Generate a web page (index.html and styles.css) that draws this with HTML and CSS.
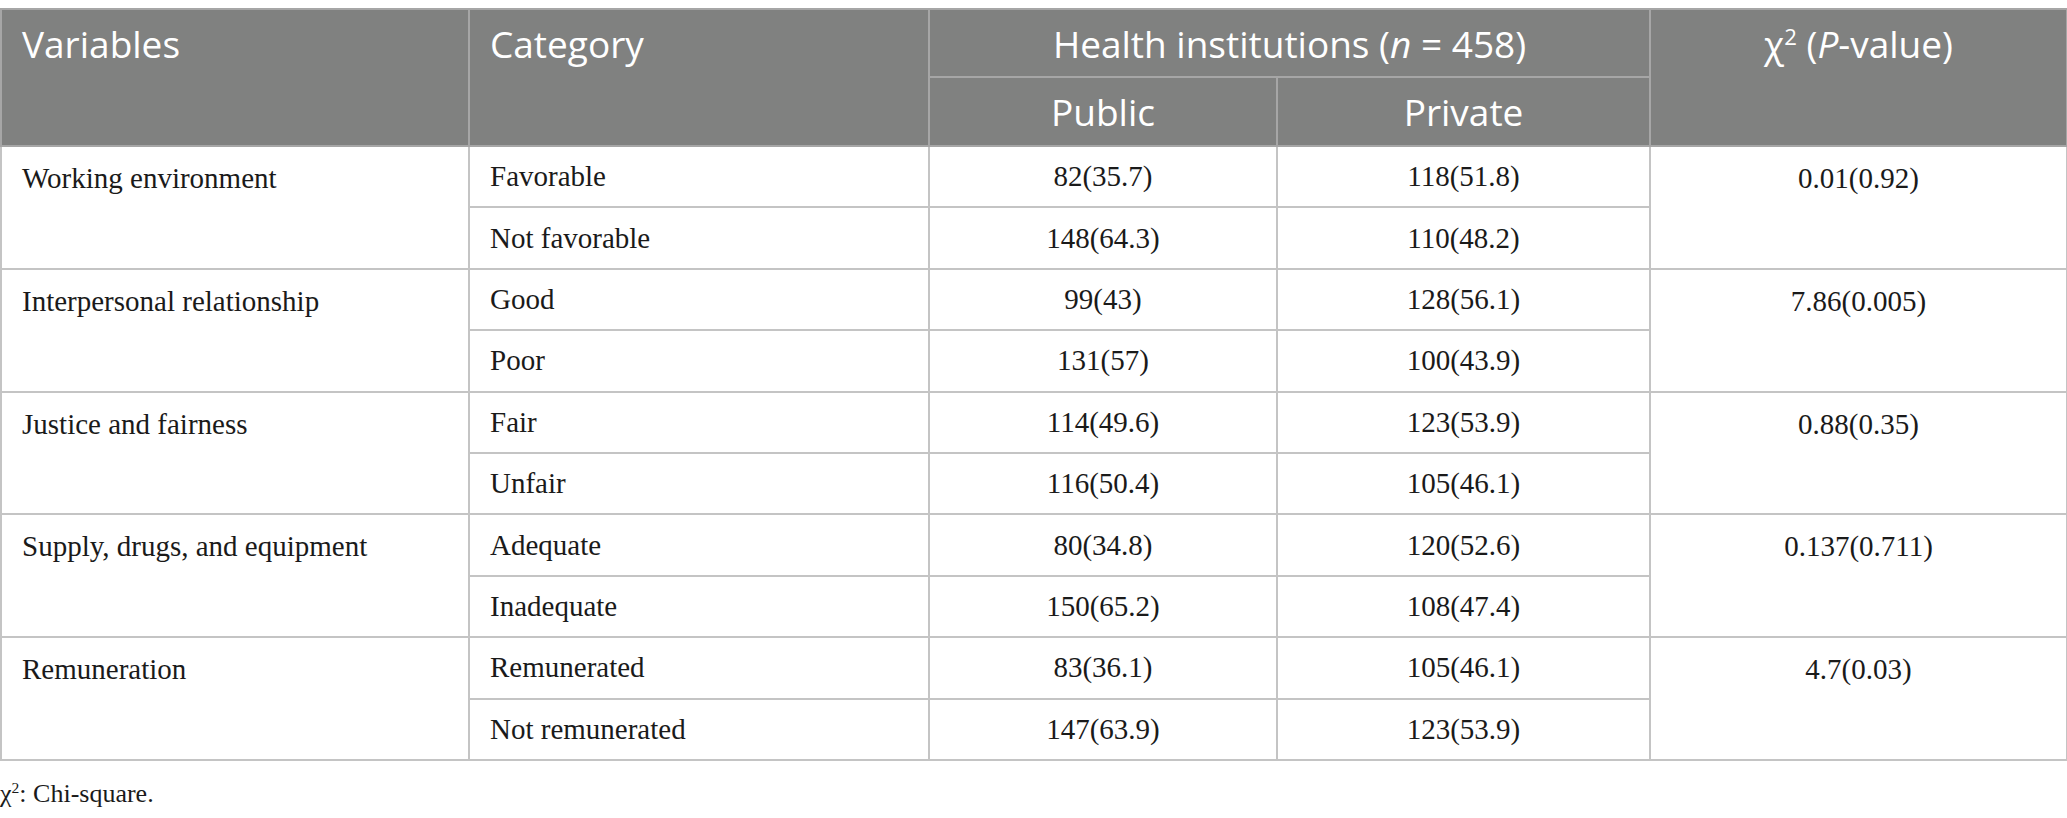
FILE: index.html
```html
<!DOCTYPE html>
<html>
<head>
<meta charset="utf-8">
<link rel="stylesheet" href="styles.css">
</head>
<body>
<table class="tbl">
  <colgroup>
    <col class="c1"><col class="c2"><col class="c3"><col class="c4"><col class="c5">
  </colgroup>
  <thead>
    <tr class="h1">
      <th rowspan="2" class="left top">Variables</th>
      <th rowspan="2" class="left top">Category</th>
      <th colspan="2">Health institutions (<i>n</i> = 458)</th>
      <th rowspan="2" class="top">χ<sup>2</sup> (<i>P</i>-value)</th>
    </tr>
    <tr class="h2">
      <th>Public</th>
      <th>Private</th>
    </tr>
  </thead>
  <tbody>
    <tr><td rowspan="2" class="var">Working environment</td><td class="cat">Favorable</td><td>82(35.7)</td><td>118(51.8)</td><td rowspan="2" class="chi">0.01(0.92)</td></tr>
    <tr><td class="cat">Not favorable</td><td>148(64.3)</td><td>110(48.2)</td></tr>
    <tr><td rowspan="2" class="var">Interpersonal relationship</td><td class="cat">Good</td><td>99(43)</td><td>128(56.1)</td><td rowspan="2" class="chi">7.86(0.005)</td></tr>
    <tr><td class="cat">Poor</td><td>131(57)</td><td>100(43.9)</td></tr>
    <tr><td rowspan="2" class="var">Justice and fairness</td><td class="cat">Fair</td><td>114(49.6)</td><td>123(53.9)</td><td rowspan="2" class="chi">0.88(0.35)</td></tr>
    <tr><td class="cat">Unfair</td><td>116(50.4)</td><td>105(46.1)</td></tr>
    <tr><td rowspan="2" class="var">Supply, drugs, and equipment</td><td class="cat">Adequate</td><td>80(34.8)</td><td>120(52.6)</td><td rowspan="2" class="chi">0.137(0.711)</td></tr>
    <tr><td class="cat">Inadequate</td><td>150(65.2)</td><td>108(47.4)</td></tr>
    <tr><td rowspan="2" class="var">Remuneration</td><td class="cat">Remunerated</td><td>83(36.1)</td><td>105(46.1)</td><td rowspan="2" class="chi">4.7(0.03)</td></tr>
    <tr><td class="cat">Not remunerated</td><td>147(63.9)</td><td>123(53.9)</td></tr>
  </tbody>
</table>
<p class="note">χ<sup>2</sup>: Chi-square.</p>
</body>
</html>
```
FILE: styles.css
```css
html, body {
  margin: 0;
  padding: 0;
  background: #ffffff;
}
body {
  padding-top: 8px;
  font-family: "Liberation Serif", "Times New Roman", serif;
  color: #1a1a1a;
}
.tbl {
  border-collapse: collapse;
  table-layout: fixed;
  width: 2066px;
}
.c1 { width: 468px; }
.c2 { width: 460px; }
.c3 { width: 348px; }
.c4 { width: 373px; }
.c5 { width: 417px; }
.tbl th {
  background: #808180;
  color: #ffffff;
  font-family: "Open Sans", "Noto Sans", sans-serif;
  font-weight: 400;
  font-size: 37px;
  border: 2px solid #a6a6a6;
  text-align: center;
  vertical-align: middle;
  padding: 0 20px;
  line-height: 1;
}
.tbl th.left { text-align: left; }
.tbl th.top { vertical-align: top; padding-top: 15px; }
.tbl th sup { font-size: 0.6em; vertical-align: 0.6em; line-height: 0; }
.h1 { height: 68px; }
.h2 { height: 69px; }
.tbl td {
  border: 2px solid #c4c4c4;
  font-size: 29px;
  height: 59.4px;
  padding: 0 20px;
  text-align: center;
  vertical-align: middle;
  line-height: 1;
}
.tbl td.var, .tbl td.cat { text-align: left; }
.tbl td.var, .tbl td.chi { vertical-align: top; padding-top: 17px; }
.note {
  margin: 18px 0 0 0;
  font-size: 26px;
  color: #1a1a1a;
}
.note sup { font-size: 0.6em; vertical-align: 0.6em; line-height: 0; }
```
